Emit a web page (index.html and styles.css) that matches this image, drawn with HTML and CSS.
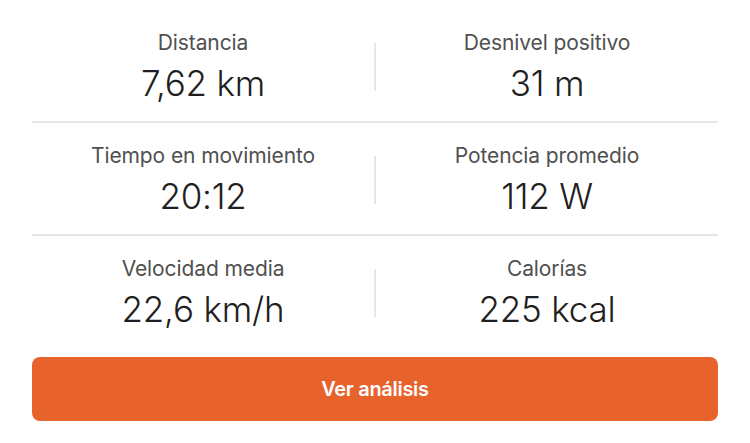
FILE: index.html
```html
<!DOCTYPE html>
<html lang="es">

<head>
  <meta charset="UTF-8" />
  <meta name="viewport" content="width=device-width, initial-scale=1.0" />
  <title>Resumen de actividad</title>
  <link rel="stylesheet" href="styles.css">
</head>

<body>
  <div class="summary">
    <div class="stats">
      <div class="row">
        <div class="stat">
          <div class="label">Distancia</div>
          <div class="value">7,62 km</div>
        </div>
        <div class="sep"></div>
        <div class="stat">
          <div class="label">Desnivel positivo</div>
          <div class="value">31 m</div>
        </div>
      </div>
      <div class="row">
        <div class="stat">
          <div class="label">Tiempo en movimiento</div>
          <div class="value">20:12</div>
        </div>
        <div class="sep"></div>
        <div class="stat">
          <div class="label">Potencia promedio</div>
          <div class="value">112 W</div>
        </div>
      </div>
      <div class="row">
        <div class="stat">
          <div class="label">Velocidad media</div>
          <div class="value">22,6 km/h</div>
        </div>
        <div class="sep"></div>
        <div class="stat">
          <div class="label">Calorías</div>
          <div class="value">225 kcal</div>
        </div>
      </div>
    </div>
    <button class="cta" type="button">Ver análisis</button>
  </div>
</body>

</html>
```

FILE: styles.css
```css
body {
  margin: 0;
  background: #fff;
  font-family: Inter, "Noto Sans", sans-serif;
}

.summary {
  padding: 10px 32px 0;
}

.row {
  display: grid;
  grid-template-columns: 1fr 2px 1fr;
  align-items: center;
  padding: 21px 0 18px;
  border-bottom: 2px solid #e6e6e6;
}

.row:last-child {
  border-bottom: none;
}

.stat {
  text-align: center;
}

.label {
  font-size: 21px;
  line-height: 24px;
  color: #505050;
  letter-spacing: -0.1px;
}

.value {
  margin-top: 8px;
  font-size: 35px;
  line-height: 40px;
  font-weight: 300;
  color: #1f1f22;
  letter-spacing: -0.2px;
}

.sep {
  width: 2px;
  height: 48px;
  background: #e6e6e6;
}

.cta {
  display: block;
  width: 100%;
  height: 64px;
  margin-top: 10px;
  border: none;
  border-radius: 8px;
  background: #e8622c;
  color: #fff;
  font-family: Inter, "Noto Sans", sans-serif;
  font-size: 20px;
  font-weight: 600;
  letter-spacing: -0.3px;
  cursor: pointer;
}
```
